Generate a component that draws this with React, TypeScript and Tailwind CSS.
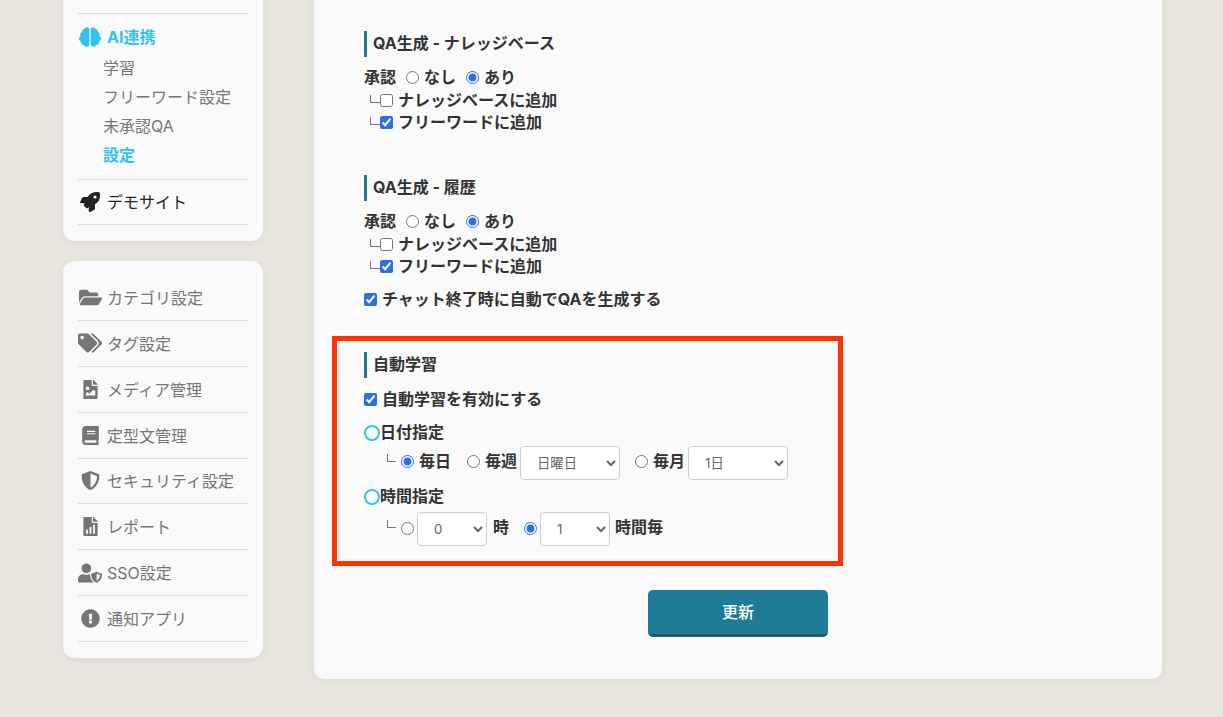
import React from "react";
import { FaBrain, FaRocket, FaFolderOpen, FaTags, FaFileImage, FaBook, FaShieldAlt, FaUserShield, FaExclamationCircle } from "react-icons/fa";

const font = { fontFamily: 'Inter, "Noto Sans CJK JP", sans-serif' };

function ReportIcon() {
  return (
    <svg viewBox="0 0 384 512" width="15" height="19" fill="#757575">
      <path d="M224 136V0H24C10.700 0 0 10.700 0 24v464c0 13.300 10.700 24 24 24h336c13.300 0 24-10.700 24-24V160H248c-13.200 0-24-10.800-24-24zM384 121.900V128H256V0h6.100c6.400 0 12.500 2.500 17 7l97.900 98c4.500 4.500 7 10.600 7 16.900z" />
      <rect x="72" y="340" width="50" height="110" fill="#fafafa" />
      <rect x="167" y="270" width="50" height="180" fill="#fafafa" />
      <rect x="262" y="210" width="50" height="240" fill="#fafafa" />
    </svg>
  );
}

function MenuRow({ icon, label }: { icon: React.ReactNode; label: string }) {
  return (
    <div className="flex h-[45.86px] items-center border-b border-[#dcdcdc] text-[16px] text-[#757575]">
      <span className="mr-[5px] flex w-[24px] shrink-0 items-center justify-center text-[#757575]">{icon}</span>
      <span className="pt-[1px]">{label}</span>
    </div>
  );
}

function Title({ children }: { children: React.ReactNode }) {
  return (
    <div className="flex h-[26px] items-center border-l-[3px] border-[#1f7c99] pb-[3px] pl-[6px] text-[16px] font-bold text-[#333]">
      {children}
    </div>
  );
}

function Radio({ checked, name }: { checked?: boolean; name: string }) {
  return <input type="radio" name={name} defaultChecked={checked} className="m-0 block h-[13px] w-[13px] shrink-0 accent-[#2a6fe8]" />;
}

function Check({ checked }: { checked?: boolean }) {
  return <input type="checkbox" defaultChecked={checked} className="m-0 block h-[13px] w-[13px] shrink-0 accent-[#2a6fe8]" />;
}

function Sel({ w, value, options }: { w: string; value: string; options: string[] }) {
  return (
    <select defaultValue={value} className={`${w} block h-[34px] rounded-[4px] border border-[#ccc] bg-white pl-[12px] text-[13.333px] font-normal text-[#666]`}>
      {options.map((o) => (
        <option key={o}>{o}</option>
      ))}
    </select>
  );
}

function Corner({ className = "" }: { className?: string }) {
  return <span className={`inline-block h-[8px] shrink-0 self-end border-b border-l border-[#777] ${className}`} />;
}

function Approval({ name }: { name: string }) {
  return (
    <>
      <div className="mt-[9px] flex h-[23px] items-center text-[#333]">
        <span className="mb-[1px]">承認</span>
        <span className="ml-[10px]"><Radio name={name} /></span>
        <span className="mb-[1px] ml-[5px]">なし</span>
        <span className="ml-[10px]"><Radio name={name} checked /></span>
        <span className="mb-[1px] ml-[5px]">あり</span>
      </div>
      <div className="flex h-[22.500px] items-center">
        <span className="ml-[6px] flex h-full items-center"><Corner className="mb-[9px] w-[10px]" /></span>
        <Check />
        <span className="mb-[1px] ml-[5px]">ナレッジベースに追加</span>
      </div>
      <div className="flex h-[22.500px] items-center">
        <span className="ml-[6px] flex h-full items-center"><Corner className="mb-[9px] w-[10px]" /></span>
        <Check checked />
        <span className="mb-[1px] ml-[5px]">フリーワードに追加</span>
      </div>
    </>
  );
}

function Circle() {
  return <span className="h-[16px] w-[16px] shrink-0 rounded-full border-2 border-[#35c3ea] bg-white" />;
}

export default function App() {
  return (
    <div style={font} className="flex h-[717px] w-[1223px] overflow-hidden bg-[#e9e6df]">
      <aside className="ml-[63px] flex w-[200px] shrink-0 flex-col justify-end gap-[20px] pb-[59px]">
        <div className="rounded-b-[12px] bg-[#fafafa] px-[15px] pt-[40px] pb-[16px] shadow-[0_2px_8px_rgba(0,0,0,0.05)]">
          <div className="border-b border-[#dcdcdc]" />
          <div className="border-b border-[#dcdcdc] pt-[8px] pb-[10px]">
            <div className="flex h-[29px] items-center text-[16px] font-bold text-[#33c2ec]">
              <span className="mr-[5px] flex w-[24px] shrink-0 items-center justify-center"><FaBrain size={22} /></span>
              <span>AI連携</span>
            </div>
            <div className="mt-[2px] pl-[25px] text-[16px] text-[#757575]">
              <div className="flex h-[29px] items-center">学習</div>
              <div className="flex h-[29px] items-center">フリーワード設定</div>
              <div className="flex h-[29px] items-center">未承認QA</div>
              <div className="flex h-[29px] items-center font-bold text-[#33c2ec]">設定</div>
            </div>
          </div>
          <div className="flex h-[45px] items-center border-b border-[#dcdcdc] text-[16px] text-[#222]">
            <span className="mr-[5px] flex w-[24px] shrink-0 items-center justify-center"><FaRocket size={20} /></span>
            <span>デモサイト</span>
          </div>
        </div>

        <div className="rounded-[12px] bg-[#fafafa] px-[15px] pt-[14px] pb-[16px] shadow-[0_2px_8px_rgba(0,0,0,0.05)]">
          <MenuRow icon={<FaFolderOpen size={23} />} label="カテゴリ設定" />
          <MenuRow icon={<FaTags size={24} />} label="タグ設定" />
          <MenuRow icon={<FaFileImage size={19} />} label="メディア管理" />
          <MenuRow icon={<FaBook size={19} />} label="定型文管理" />
          <MenuRow icon={<FaShieldAlt size={19} />} label="セキュリティ設定" />
          <MenuRow icon={<ReportIcon />} label="レポート" />
          <MenuRow icon={<FaUserShield size={24} />} label="SSO設定" />
          <MenuRow icon={<FaExclamationCircle size={19} />} label="通知アプリ" />
        </div>
      </aside>

      <main className="ml-[51px] flex w-[848px] shrink-0 flex-col justify-end pb-[38px]">
        <div className="rounded-b-[10px] bg-[#fafafa] px-[18px] pt-[80px] pb-[42px] text-[16px] font-bold text-[#333] shadow-[0_2px_8px_rgba(0,0,0,0.05)]">
          <div className="pl-[32px]">
            <Title>QA生成 - ナレッジベース</Title>
            <Approval name="a" />
            <div className="mt-[41px]"><Title>QA生成 - 履歴</Title></div>
            <Approval name="b" />
            <div className="mt-[10px] flex h-[22px] items-center gap-[5px]">
              <Check checked />
              <span className="mb-[1px]">チャット終了時に自動でQAを生成する</span>
            </div>
          </div>

          <div className="mt-[26px] h-[230px] w-[511px] border-[5px] border-[#ff3300] pt-[11px] pl-[27px]">
            <Title>自動学習</Title>
            <div className="mt-[9px] flex h-[24px] items-center gap-[5px]">
              <Check checked />
              <span className="mb-[1px]">自動学習を有効にする</span>
            </div>
            <div className="mt-[10px] flex h-[24px] items-center">
              <Circle />
              <span className="mb-[2px]">日付指定</span>
            </div>
            <div className="mt-[1px] flex h-[34px] items-center pl-[23px]">
              <Corner className="mb-[18px] w-[9px]" />
              <span className="mb-[3px] ml-[5px]"><Radio name="c" checked /></span>
              <span className="mb-[5px] ml-[5px]">毎日</span>
              <span className="mb-[3px] ml-[16px]"><Radio name="c" /></span>
              <span className="mb-[5px] ml-[5px]">毎週</span>
              <span className="ml-[3px]"><Sel w="w-[100px]" value="日曜日" options={["日曜日", "月曜日"]} /></span>
              <span className="mb-[3px] ml-[15px]"><Radio name="c" /></span>
              <span className="mb-[5px] ml-[5px]">毎月</span>
              <span className="ml-[3px]"><Sel w="w-[100px]" value="1日" options={["1日", "2日"]} /></span>
            </div>
            <div className="mt-[5px] flex h-[24px] items-center">
              <Circle />
              <span className="mb-[2px]">時間指定</span>
            </div>
            <div className="mt-[3px] flex h-[34px] items-center pl-[23px]">
              <Corner className="mb-[18px] w-[9px]" />
              <span className="mb-[2px] ml-[5px]"><Radio name="d" /></span>
              <span className="ml-[3px]"><Sel w="w-[70px]" value="0" options={["0", "1"]} /></span>
              <span className="mb-[4px] ml-[6px]">時</span>
              <span className="mb-[2px] ml-[15px]"><Radio name="d" checked /></span>
              <span className="ml-[3px]"><Sel w="w-[70px]" value="1" options={["1", "2"]} /></span>
              <span className="mb-[4px] ml-[5px]">時間毎</span>
            </div>
          </div>

          <button className="mt-[24px] ml-[316px] block h-[47px] w-[180px] rounded-[5px] border-b-[3px] border-[#255b68] bg-[#1f7c99] text-[16px] font-medium text-white">
            更新
          </button>
        </div>
      </main>
    </div>
  );
}
